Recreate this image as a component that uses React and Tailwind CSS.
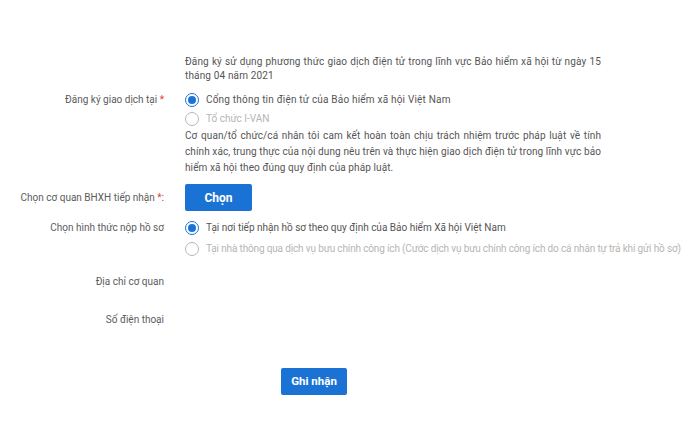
import React from "react";

function Radio({ checked, disabled, children, textClass = "" }) {
  return (
    <div className="flex items-center h-[19px]">
      <span
        className={
          "flex items-center justify-center w-[14px] h-[14px] rounded-full border-[1.5px] shrink-0 " +
          (checked ? "border-[#1a73d4]" : "border-[#b8b8b8]")
        }
      >
        {checked && <span className="w-[8px] h-[8px] rounded-full bg-[#1a73d4]" />}
      </span>
      <span
        className={
          "ml-[7px] whitespace-nowrap " + (disabled ? "text-[#b5b5b5] " : "text-[#555] ") + textClass
        }
      >
        {children}
      </span>
    </div>
  );
}

function Row({ label, children, className = "" }) {
  return (
    <div className={"flex " + className}>
      <div className="w-[164px] shrink-0 text-right text-[#5c5c5c]">{label}</div>
      <div className="ml-[21px] flex-1">{children}</div>
    </div>
  );
}

export default function App() {
  return (
    <div
      className="w-[700px] h-[438px] bg-white text-[10px] text-[#555] overflow-hidden"
      style={{ fontFamily: "Roboto, 'Noto Sans', sans-serif" }}
    >
      <div className="pt-[55px]">
        <Row label="">
          <p className="w-[416px] leading-[14px] text-justify tracking-[0.15px]">
            Đăng ký sử dụng phương thức giao dịch điện tử trong lĩnh vực Bảo hiểm xã hội từ ngày 15 tháng 04 năm 2021
          </p>
        </Row>

        <Row
          className="mt-[7px]"
          label={
            <span className="leading-[19px]">
              Đăng ký giao dịch tại <span className="text-[#e53935]">*</span>
            </span>
          }
        >
          <Radio checked textClass="tracking-[0.2px]">Cổng thông tin điện tử của Bảo hiểm xã hội Việt Nam</Radio>
          <Radio disabled>Tổ chức I-VAN</Radio>
          <p className="w-[416px] leading-[16px] text-justify tracking-[0.1px]">
            Cơ quan/tổ chức/cá nhân tôi cam kết hoàn toàn chịu trách nhiệm trước pháp luật về tính chính xác, trung thực của nội dung nêu trên và thực hiện giao dịch điện tử trong lĩnh vực bảo hiểm xã hội theo đúng quy định của pháp luật.
          </p>
        </Row>

        <Row
          className="mt-[8px] items-center"
          label={
            <span>
              Chọn cơ quan BHXH tiếp nhận <span className="text-[#e53935]">*</span>:
            </span>
          }
        >
          <button className="w-[67px] h-[27px] rounded-[2px] bg-[#1a73d4] text-white font-bold text-[12px]">
            Chọn
          </button>
        </Row>

        <Row className="mt-[7px]" label={<span className="leading-[19px]">Chọn hình thức nộp hồ sơ</span>}>
          <Radio checked>Tại nơi tiếp nhận hồ sơ theo quy định của Bảo hiểm Xã hội Việt Nam</Radio>
          <div className="mt-[2px]">
            <Radio disabled textClass="tracking-[-0.15px]">
              Tại nhà thông qua dịch vụ bưu chính công ích (Cước dịch vụ bưu chính công ích do cá nhân tự trả khi gửi hồ sơ)
            </Radio>
          </div>
        </Row>

        <Row className="mt-[14px]" label={<span className="leading-[19px]">Địa chỉ cơ quan</span>}>
          <div className="h-[19px]" />
        </Row>

        <Row className="mt-[19px]" label={<span className="leading-[19px]">Số điện thoại</span>}>
          <div className="h-[19px]" />
        </Row>

        <div className="mt-[39px] flex pl-[281px]">
          <button className="w-[66px] h-[27px] rounded-[2px] bg-[#1a73d4] text-white font-bold text-[11.5px]">
            Ghi nhận
          </button>
        </div>
      </div>
    </div>
  );
}
